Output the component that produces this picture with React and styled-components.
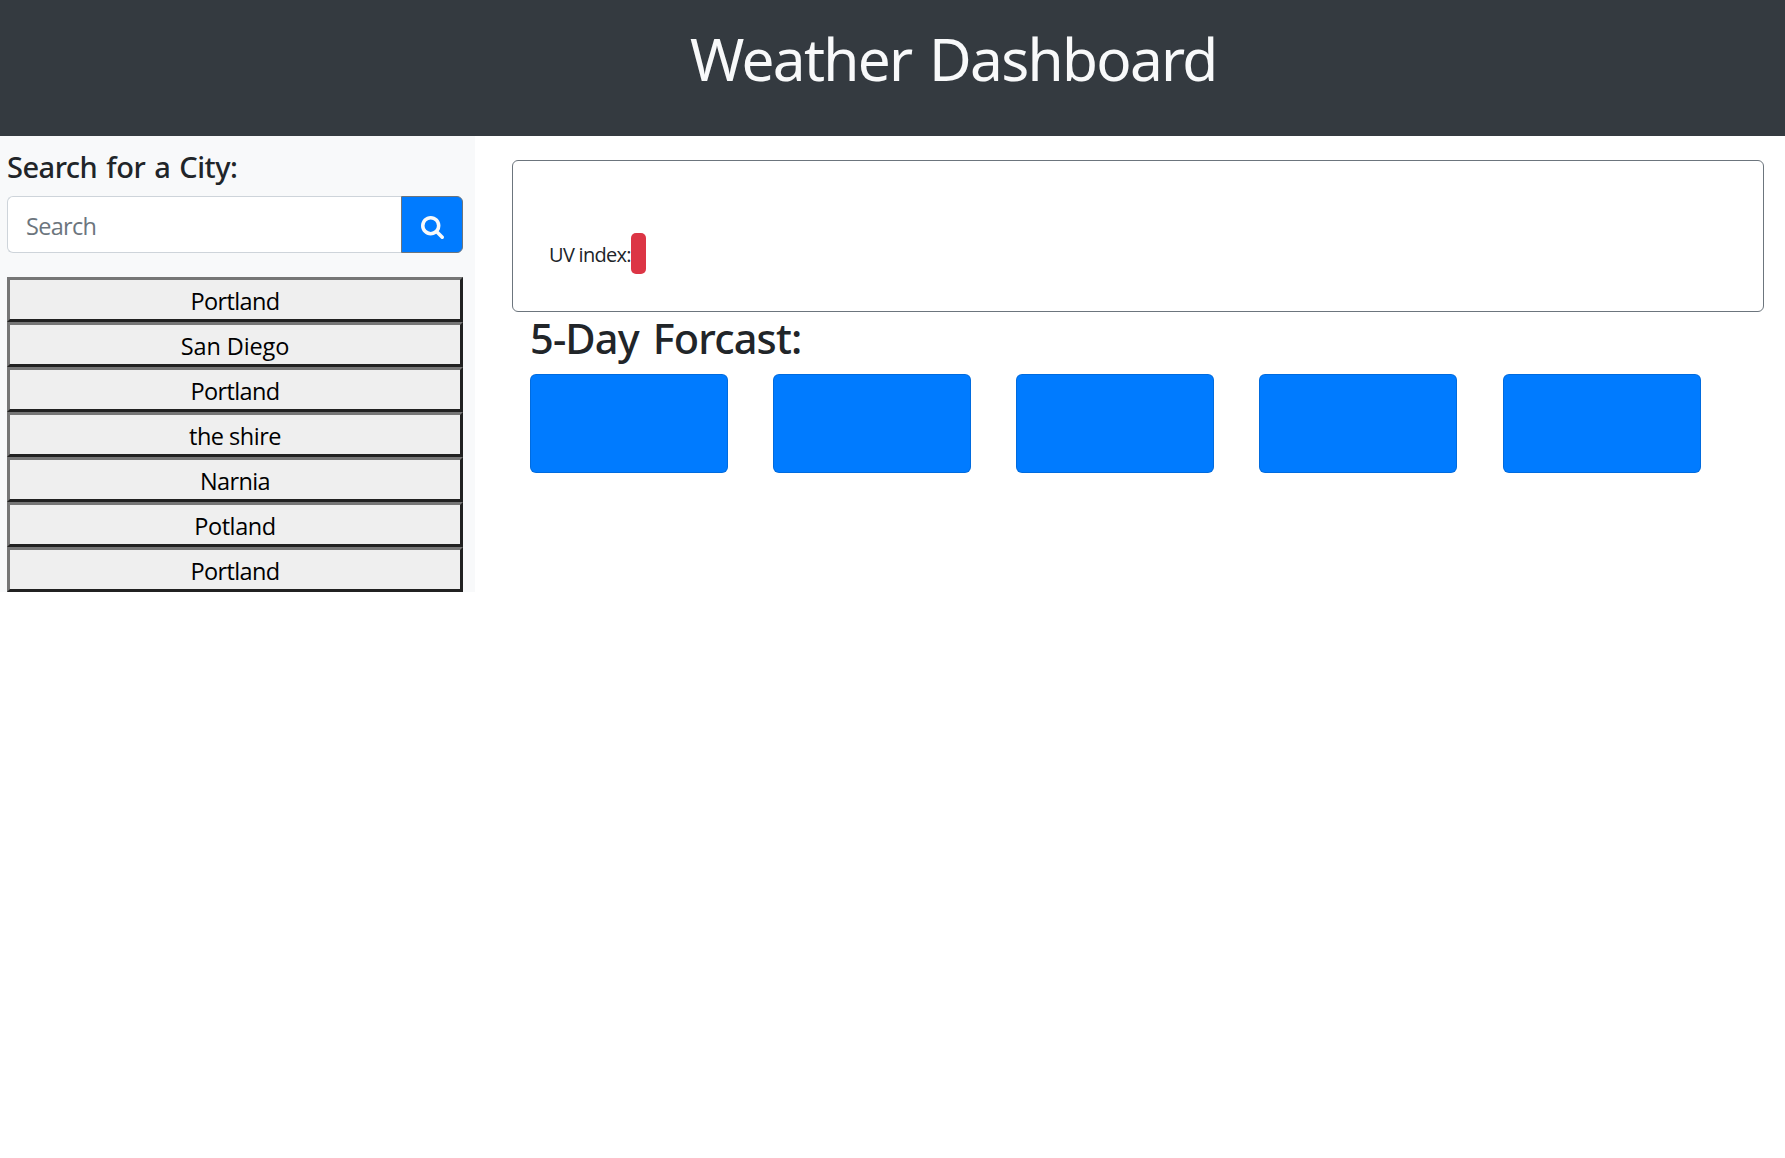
import React from "react";
import styled, { createGlobalStyle } from "styled-components";

const GlobalStyle = createGlobalStyle`
  *, *::before, *::after { box-sizing: border-box; }
  body {
    margin: 0;
    background: #fff;
    color: #212529;
    font-family: "Open Sans", "Noto Sans", sans-serif;
  }
`;

const Header = styled.header`
  height: 136px;
  padding: 21px 0 0 690px;
  background: #343a40;
`;

const Title = styled.h1`
  margin: 0;
  color: #f8f9fa;
  font-family: "Noto Sans", sans-serif;
  font-size: 58.5px;
  font-weight: 400;
  line-height: 75px;
  letter-spacing: -1.7px;
  word-spacing: 4px;
  white-space: nowrap;
`;

const Layout = styled.div`
  display: flex;
  align-items: flex-start;
`;

const Sidebar = styled.aside`
  width: 475px;
  padding: 13px 12px 0 7px;
  background: #f8f9fa;
`;

const Heading = styled.h2`
  margin: 0 0 11px;
  font-family: "Noto Sans", sans-serif;
  font-weight: 500;
  white-space: nowrap;
`;

const SearchHeading = styled(Heading)`
  font-size: 29px;
  line-height: 36px;
  letter-spacing: -0.5px;
  word-spacing: 2px;
`;

const ForecastHeading = styled(Heading)`
  font-size: 41.5px;
  line-height: 50px;
  letter-spacing: -0.85px;
  word-spacing: 4px;
`;

const SearchForm = styled.form`
  display: flex;
  height: 57px;
  margin-bottom: 24px;
`;

const SearchInput = styled.input`
  flex: 1;
  min-width: 0;
  padding: 3px 18px 0;
  border: 1px solid #ced4da;
  border-right: 0;
  border-radius: 6px 0 0 6px;
  background: #fff;
  font: 400 23.5px "Open Sans", sans-serif;
  letter-spacing: -0.7px;
  outline: none;

  &::placeholder {
    color: #6c757d;
    opacity: 1;
  }
`;

const SearchButton = styled.button`
  display: flex;
  align-items: center;
  justify-content: center;
  width: 62px;
  padding: 6px 0 0;
  border: 1px solid #6c757d;
  border-radius: 0 6px 6px 0;
  background: #007bff;
  color: #f8f9fa;
`;

const CityList = styled.div`
  display: flex;
  flex-direction: column;
`;

const CityButton = styled.button`
  height: 45px;
  padding: 3px 0 0;
  border: 3px solid;
  border-color: #767676 #212121 #212121 #767676;
  border-radius: 0;
  background: #efefef;
  color: #000;
  font: 400 23.5px/36px "Open Sans", sans-serif;
  letter-spacing: ${(p) => p.$tracking ?? -0.6}px;
`;

const Main = styled.main`
  flex: 1;
  padding: 24px 21px 0 37px;
`;

const CurrentCard = styled.section`
  height: 152px;
  margin-bottom: 1px;
  padding: 72px 36px 0 36px;
  border: 1px solid #6c757d;
  border-radius: 6px;
`;

const UvRow = styled.div`
  display: flex;
  align-items: center;
  height: 41px;
`;

const UvLabel = styled.span`
  width: 82px;
  padding-top: 3px;
  font-size: 20px;
  line-height: 30px;
  letter-spacing: -0.7px;
  white-space: nowrap;
`;

const UvBadge = styled.span`
  width: 15px;
  height: 41px;
  border-radius: 5px;
  background: #dc3545;
`;

const Forecast = styled.section`
  padding-left: 18px;
`;

const DayRow = styled.div`
  display: grid;
  grid-template-columns: repeat(5, 198px);
  column-gap: 45.15px;
`;

const DayCard = styled.div`
  height: 99px;
  border: 1px solid rgba(0, 0, 0, 0.125);
  border-radius: 6px;
  background: #007bff;
`;

const SearchIcon = () => (
  <svg width="23" height="23" viewBox="64 128 1664 1664" fill="currentColor" aria-hidden="true">
    <path d="M1216 832q0-185-131.5-316.5t-316.5-131.5-316.5 131.5-131.5 316.5 131.5 316.5 316.5 131.5 316.5-131.5 131.5-316.5zm512 832q0 52-38 90t-90 38q-54 0-90-38l-343-342q-179 124-399 124-143 0-273.5-55.5t-225-150-150-225-55.5-273.5 55.5-273.5 150-225 225-150 273.5-55.5 273.5 55.5 225 150 150 225 55.5 273.5q0 220-124 399l343 343q37 37 37 90z" />
  </svg>
);

const cities = [
  { name: "Portland" },
  { name: "San Diego", tracking: -0.1 },
  { name: "Portland" },
  { name: "the shire", tracking: -0.5 },
  { name: "Narnia" },
  { name: "Potland", tracking: -0.4 },
  { name: "Portland" },
];

const days = [1, 2, 3, 4, 5];

export default function App() {
  return (
    <>
      <GlobalStyle />
      <Header>
        <Title>Weather Dashboard</Title>
      </Header>
      <Layout>
        <Sidebar>
          <SearchHeading>Search for a City:</SearchHeading>
          <SearchForm onSubmit={(e) => e.preventDefault()}>
            <SearchInput type="text" placeholder="Search" />
            <SearchButton type="submit">
              <SearchIcon />
            </SearchButton>
          </SearchForm>
          <CityList>
            {cities.map((city, i) => (
              <CityButton key={i} type="button" $tracking={city.tracking}>
                {city.name}
              </CityButton>
            ))}
          </CityList>
        </Sidebar>
        <Main>
          <CurrentCard>
            <UvRow>
              <UvLabel>UV index:</UvLabel>
              <UvBadge />
            </UvRow>
          </CurrentCard>
          <Forecast>
            <ForecastHeading>5-Day Forcast:</ForecastHeading>
            <DayRow>
              {days.map((day) => (
                <DayCard key={day} />
              ))}
            </DayRow>
          </Forecast>
        </Main>
      </Layout>
    </>
  );
}
